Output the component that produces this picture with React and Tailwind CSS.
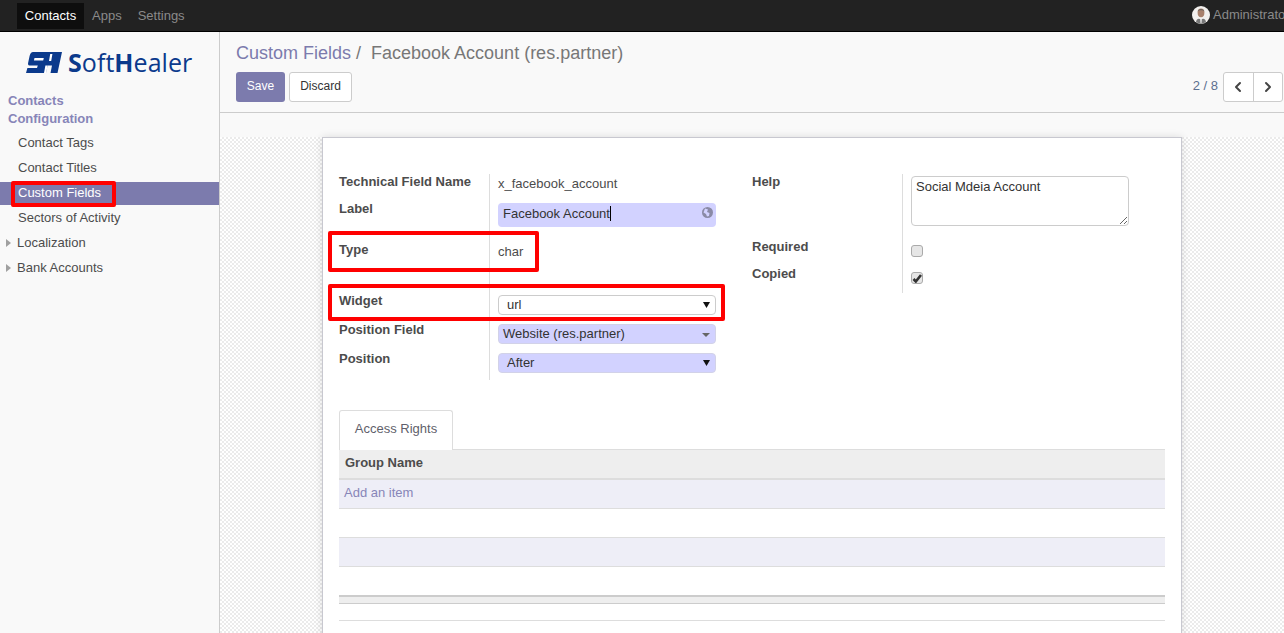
import React from "react";
import { ChevronLeft, ChevronRight } from "lucide-react";

function Logo() {
  return (
    <div className="flex items-center h-[30px] pl-[26px]">
      <svg width="36" height="21" viewBox="0 0 36 21" className="shrink-0">
        <path fill="#0b3a8c" d="M7 0 H36 L31.5 21 H24.5 L26 13.5 H21.5 L20 21 H0 L1.4 16 H11 L11.8 13.5 H3.5 C2 13.5 1.8 12 2.2 10.5 L3.6 4 C4.2 1.5 5.5 0 7 0 Z" />
        <path fill="#ffffff" d="M8.5 6 H17.8 L17.2 8.6 H7.9 Z M24.2 2 H26.4 L25.2 9 H23 Z M19.4 13.5 H21.5 L20.3 21 H18 Z" />
      </svg>
      <div className="ml-[6px] text-[25px] leading-[30px] text-[#0b3a8c] font-['Open_Sans',sans-serif] flex items-baseline tracking-[0.05px]">
        <span className="font-bold">S</span>
        <span>of</span>
        <span>t</span>
        <span className="font-bold">H</span>
        <span>ealer</span>
      </div>
    </div>
  );
}

function Select({ value, blue, caret = "black", pad = "pl-[8px]" }) {
  return (
    <div className={`w-[218px] h-[20px] rounded-[4px] border flex items-center justify-between ${pad} pr-[5px] text-[13px] text-[#333] ${blue ? "bg-[#d2d2ff] border-[#d2d2e8]" : "bg-white border-[#ccc]"}`}>
      <span>{value}</span>
      {caret === "black" ? (
        <svg width="7" height="6" viewBox="0 0 7 6"><path d="M0 0H7L3.5 6Z" fill="#111" /></svg>
      ) : (
        <svg width="8" height="4" viewBox="0 0 8 4" className="mt-[2px]"><path d="M0 0H8L4 4Z" fill="#666" /></svg>
      )}
    </div>
  );
}

function Check({ checked }) {
  return (
    <div className="w-[12px] h-[12px] rounded-[3px] border border-[#aaa] bg-[#e6e6e6] flex items-center justify-center">
      {checked && (
        <svg width="10" height="9" viewBox="0 0 10 9"><path d="M1.5 5 L3.8 7.5 L9 1" stroke="#333" strokeWidth="2.6" fill="none" /></svg>
      )}
    </div>
  );
}

function Row({ label, h, children }) {
  return (
    <div className="flex" style={{ height: h }}>
      <div className="w-[150px] shrink-0 font-bold text-[13px] leading-[15px] text-[#4c4c4c]">{label}</div>
      <div className="border-l border-[#ddd] pl-[8px] flex-1">{children}</div>
    </div>
  );
}

function RedBox({ className }) {
  return <div className={`absolute border-[4px] border-[#ff0000] rounded-[2px] pointer-events-none ${className}`} />;
}

function SideItem({ children, active, arrow }) {
  return (
    <div className={`relative flex items-center text-[13px] ${arrow ? "pl-[17px]" : "pl-[18px]"} ${active ? "bg-[#7c7bad] text-white h-[23px] mt-[2px] pb-[2px]" : "h-[25px] text-[#4c4c4c]"}`}>
      {arrow && (
        <svg width="5" height="8" viewBox="0 0 5 8" className="absolute left-[6px] top-[9px]"><path d="M0 0L5 4L0 8Z" fill="#a0a0a0" /></svg>
      )}
      {children}
    </div>
  );
}

export default function App() {
  return (
    <div className="relative w-[1284px] h-[633px] overflow-hidden flex flex-col bg-white font-['Liberation_Sans',Arial,sans-serif] text-[13px] text-[#4c4c4c]">
      {/* Top bar */}
      <header className="h-[32px] shrink-0 bg-[#222222] border-b border-black flex items-start justify-between">
        <nav className="flex pl-[17px] pt-[3px] text-[13px]">
          <div className="h-[26px] w-[67px] bg-[#0e0e0e] flex items-center justify-center text-white pb-[1px]">Contacts</div>
          <div className="h-[26px] ml-[8px] flex items-center text-[#8a8a8a] pb-[1px]">Apps</div>
          <div className="h-[26px] ml-[16px] flex items-center text-[#8a8a8a] pb-[1px]">Settings</div>
        </nav>
        <div className="flex items-center h-[30px] w-[92px] overflow-hidden shrink-0 whitespace-nowrap">
          <svg width="18" height="18" viewBox="0 0 18 18" className="shrink-0">
            <circle cx="9" cy="9" r="9" fill="#f2f0ee" />
            <ellipse cx="9" cy="6.8" rx="3.4" ry="4.4" fill="#a8806c" />
            <path d="M5.6 5.5 C5.8 2 12.2 2 12.4 5.5 C11 3.8 7 3.8 5.6 5.5Z" fill="#6b625c" />
            <path d="M4 16 C4.5 12.5 7 12 9 13.5 C11 12 13.5 12.5 14 16 A9 9 0 0 1 4 16Z" fill="#777" />
            <path d="M8 13 H10 L9.6 17 H8.4Z" fill="#dcdcdc" />
          </svg>
          <span className="ml-[3px] text-[#8a8a8a]">Administrator</span>
        </div>
      </header>

      <div className="flex-1 flex min-h-0">
        {/* Sidebar */}
        <aside className="w-[220px] shrink-0 bg-[#f9f9f9] border-r border-[#cccccc] pt-[15px]">
          <Logo />
          <div className="mt-[15px] pl-[8px] font-bold text-[13px] leading-[18px] text-[#8785b8]">
            <div>Contacts</div>
            <div>Configuration</div>
          </div>
          <div className="mt-[2px]">
            <SideItem>Contact Tags</SideItem>
            <SideItem>Contact Titles</SideItem>
            <SideItem active>Custom Fields</SideItem>
            <SideItem>Sectors of Activity</SideItem>
            <SideItem arrow>Localization</SideItem>
            <SideItem arrow>Bank Accounts</SideItem>
          </div>
        </aside>

        {/* Main */}
        <main className="flex-1 min-w-0 flex flex-col">
          <div className="h-[81px] shrink-0 bg-[#f9f9f9] border-b border-[#cccccc] pl-[16px] pr-[1px] pt-[10px]">
            <div className="text-[18px] leading-[22px] whitespace-nowrap">
              <span className="text-[#7c7bad]">Custom Fields</span>
              <span className="text-[#777]"> /&nbsp; Facebook Account (res.partner)</span>
            </div>
            <div className="flex items-center justify-between mt-[8px]">
              <div className="flex gap-[4px] text-[12px]">
                <div className="w-[49px] h-[30px] rounded-[3px] bg-[#7c7bad] text-white flex items-center justify-center pb-[2px]">Save</div>
                <div className="w-[63px] h-[30px] rounded-[3px] bg-white border border-[#cccccc] text-[#333] flex items-center justify-center pb-[2px]">Discard</div>
              </div>
              <div className="flex items-center">
                <span className="text-[13px] text-[#5c6f8f] mr-[5px] pb-[2px]">2 / 8</span>
                <div className="flex h-[30px] w-[60px] bg-white border border-[#cccccc] rounded-[3px]">
                  <div className="flex-1 flex items-center justify-center border-r border-[#cccccc]">
                    <ChevronLeft size={16} strokeWidth={3} color="#444" />
                  </div>
                  <div className="flex-1 flex items-center justify-center">
                    <ChevronRight size={16} strokeWidth={3} color="#444" />
                  </div>
                </div>
              </div>
            </div>
          </div>

          {/* Content */}
          <div className="flex-1 min-h-0 overflow-hidden bg-[#f9f9f9] relative">
            <div className="absolute left-0 right-0 top-[24px] bottom-0 bg-[repeating-conic-gradient(#ebebeb_0_25%,#ffffff_0_50%)] bg-[length:4px_4px]" />
            <div className="relative ml-[102px] mt-[24px] w-[860px] h-[520px] bg-white border border-[#c8c8d0] shadow-[0_0_8px_rgba(0,0,0,0.12)] px-[16px] pt-[36px]">
              {/* Field groups */}
              <div className="flex">
                <div className="w-[413px] shrink-0">
                  <Row label="Technical Field Name" h={27}>
                    <div className="mt-[1px] leading-[18px] text-[#4c4c4c]">x_facebook_account</div>
                  </Row>
                  <Row label="Label" h={41}>
                    <div className="mt-[2px] w-[218px] h-[24px] rounded-[4px] bg-[#d2d2ff] flex items-start justify-between pt-[3px] pl-[5px] pr-[3px] text-[#333]">
                      <span className="border-r border-black leading-[15px]">Facebook Account</span>
                      <svg width="11" height="11" viewBox="0 0 11 11" className="mt-[1px]">
                        <circle cx="5.5" cy="5.5" r="5.5" fill="#8a8aa6" />
                        <path d="M3 1.5 L6 2.5 L5 5 L7.5 6 L7 9 L5 9.5 L4 7 L1.5 5.5 Z" fill="#d2d2ff" />
                      </svg>
                    </div>
                  </Row>
                  <Row label="Type" h={51}>
                    <div className="mt-[1px] leading-[18px]">char</div>
                  </Row>
                  <Row label="Widget" h={29}>
                    <div className="pt-[2px]"><Select value="url" /></div>
                  </Row>
                  <Row label="Position Field" h={29}>
                    <div className="pt-[2px]"><Select value="Website (res.partner)" blue caret="gray" pad="pl-[4px]" /></div>
                  </Row>
                  <Row label="Position" h={29}>
                    <div className="pt-[2px]"><Select value="After" blue /></div>
                  </Row>
                </div>
                <div className="flex-1">
                  <Row label="Help" h={65}>
                    <textarea
                      readOnly
                      value="Social Mdeia Account"
                      className="block mt-[2px] w-[218px] h-[50px] rounded-[4px] border border-[#ccc] bg-white px-[4px] py-[2px] text-[13px] leading-[15px] text-[#333] outline-none"
                    />
                  </Row>
                  <Row label="Required" h={27}>
                    <div className="pt-[6px]"><Check /></div>
                  </Row>
                  <Row label="Copied" h={27}>
                    <div className="pt-[6px]"><Check checked /></div>
                  </Row>
                </div>
              </div>

              {/* Notebook */}
              <div className="mt-[30px] w-[826px]">
                <div className="w-[114px] h-[40px] bg-white border border-b-0 border-[#ddd] rounded-t-[3px] flex items-center justify-center pb-[4px] text-[#5f5f6b] relative z-10 -mb-[1px]">
                  Access Rights
                </div>
                <div className="h-[31px] bg-[#eeeeee] border-t border-b-2 border-[#dddddd] flex items-center pl-[6px] pb-[2px] font-bold text-[#4c4c4c]">Group Name</div>
                <div className="h-[29px] bg-[#eeeef7] border-b border-[#dddddd] flex items-center pl-[5px] pb-[2px] text-[#8785b8]">Add an item</div>
                <div className="h-[29px] bg-white border-b border-[#dddddd]" />
                <div className="h-[29px] bg-[#eeeef7] border-b border-[#dddddd]" />
                <div className="h-[28px] bg-white" />
                <div className="h-[9px] bg-[#eeeeee] border-t-2 border-b border-t-[#cccccc] border-b-[#cccccc]" />
                <div className="h-[17px] bg-white border-b border-[#dddddd]" />
              </div>
            </div>
          </div>
        </main>
      </div>

      {/* Red annotation boxes */}
      <RedBox className="left-[11px] top-[181px] w-[105px] h-[26px]" />
      <RedBox className="left-[328px] top-[231px] w-[211px] h-[41px]" />
      <RedBox className="left-[328px] top-[284px] w-[397px] h-[37px]" />
    </div>
  );
}
